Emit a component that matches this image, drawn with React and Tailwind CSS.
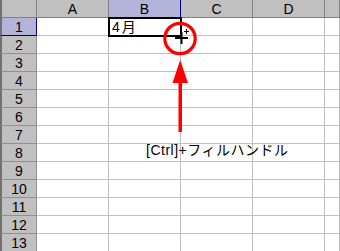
import React from "react";

const cols = ["A", "B", "C", "D", ""];
const rows = Array.from({ length: 13 }, (_, i) => i + 1);

export default function App() {
  return (
    <div className="relative w-[340px] h-[251px] overflow-hidden bg-white" style={{ fontFamily: '"Liberation Sans", Arial, sans-serif' }}>
      <div className="flex flex-col">
        {/* header row */}
        <div className="flex h-[18px]">
          <div className="w-[37px] h-[18px] shrink-0 bg-[#c0c0c0] border-l-2 border-l-[#707070] border-r border-b border-[#808080]" />
          {cols.map((c, i) => (
            <div
              key={i}
              className={
                (i === 4 ? "flex-1 " : "w-[72px] shrink-0 ") +
                (c === "B"
                  ? "bg-[#b4b4da] border-r border-b border-[#000080] "
                  : "bg-[#c0c0c0] border-r border-b border-[#808080] ") +
                "h-[18px] flex items-center justify-center text-[14px] leading-none text-black"
              }
            >
              {c}
            </div>
          ))}
        </div>
        {rows.map((r) => (
          <div key={r} className="flex h-[18px]">
            <div
              className={
                "w-[37px] h-[18px] shrink-0 border-l-2 border-l-[#707070] flex items-center justify-center text-[14px] leading-none text-black " +
                (r === 1
                  ? "bg-[#b4b4da] border-r border-b border-[#000080]"
                  : "bg-[#c0c0c0] border-r border-b border-[#909090]")
              }
            >
              {r}
            </div>
            {cols.map((c, i) => (
              <div
                key={i}
                className={
                  (i === 4 ? "flex-1 " : "w-[72px] shrink-0 ") +
                  "h-[18px] border-r border-b border-[#c0c0c0]"
                }
              />
            ))}
          </div>
        ))}
      </div>

      {/* active cell B1 */}
      <div className="absolute left-[108px] top-[17px] w-[74px] h-[20px] border-2 border-black flex items-center pl-[2px] text-[14px] leading-none tracking-[2px] text-black" style={{ fontFamily: '"Liberation Sans", "Noto Sans CJK JP", sans-serif' }}>
        4月
      </div>

      {/* cursor + circle */}
      <svg className="absolute left-0 top-0" width="340" height="251" viewBox="0 0 340 251">
        {/* fill cursor */}
        <rect x="175" y="37" width="13" height="2" fill="black" />
        <rect x="180.5" y="32" width="2" height="12" fill="black" />
        <rect x="184" y="31" width="5" height="1" fill="black" />
        <rect x="186" y="29" width="1" height="5" fill="black" />
        {/* red circle */}
        <circle cx="180" cy="38.5" r="15.2" fill="none" stroke="#ff0000" strokeWidth="3.2" />
        {/* arrow */}
        <rect x="178.5" y="80" width="3.5" height="52" fill="#ff0000" />
        <polygon points="180.2,60 188,83 172.5,83" fill="#ff0000" />
      </svg>

      <div className="absolute left-[146px] top-[143px] text-[14px] leading-none tracking-[0.5px] text-black whitespace-nowrap" style={{ fontFamily: '"Liberation Sans", "Noto Sans CJK JP", sans-serif' }}>
        [Ctrl]+フィルハンドル
      </div>
    </div>
  );
}
